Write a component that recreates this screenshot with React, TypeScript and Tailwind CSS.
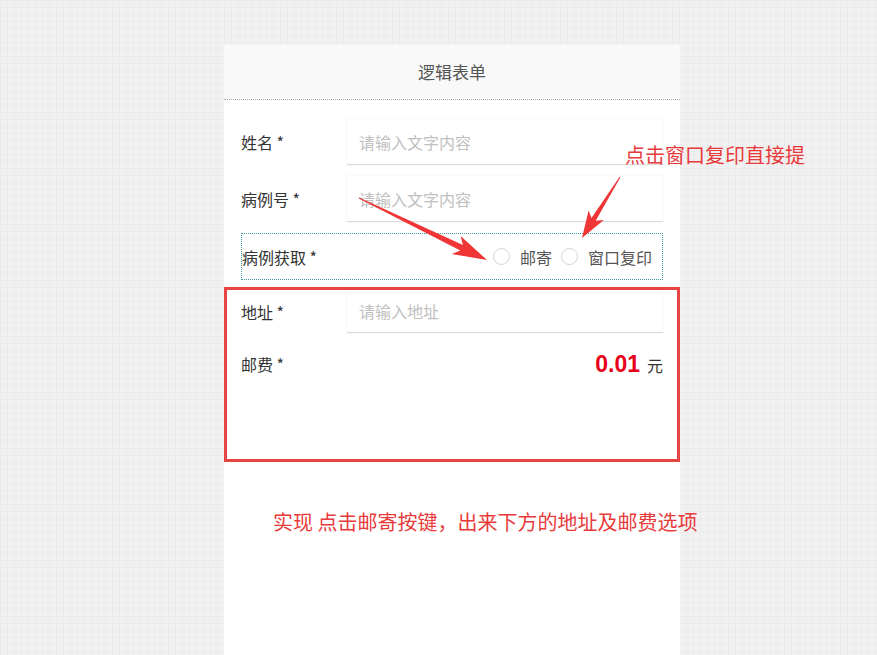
import React, { useState } from 'react';

const FONT = "font-['Microsoft_YaHei','Noto_Sans_CJK_SC',sans-serif]";

type Way = 'post' | 'window';

const Field = ({ label, placeholder, h = 'h-[46px]' }: { label: string; placeholder: string; h?: string }) => (
  <div className="flex items-center">
    <div className="w-[106px] shrink-0 text-[16px] text-[#333]">{label} *</div>
    <input
      type="text"
      placeholder={placeholder}
      className={`${h} flex-1 border-b border-[#dadada] bg-white px-3 text-[16px] text-[#333] shadow-[0_0_3px_rgba(0,0,0,0.06)] outline-none placeholder:text-[#c0c0c0]`}
    />
  </div>
);

const Radio = ({ checked, label, onClick }: { checked: boolean; label: string; onClick: () => void }) => (
  <button onClick={onClick} className="flex items-center gap-[10px] text-[16px] text-[#555]">
    <span className="flex h-[17px] w-[17px] items-center justify-center rounded-full border border-[#d4d4d4] bg-white">
      {checked && <span className="h-[9px] w-[9px] rounded-full bg-[#e83a3a]" />}
    </span>
    {label}
  </button>
);

export default function App() {
  const [way, setWay] = useState<Way | null>(null);

  return (
    <div
      className={`relative min-h-[655px] w-full overflow-hidden bg-[#f1f1f1] bg-[linear-gradient(#ebebeb_1px,transparent_1px),linear-gradient(90deg,#ebebeb_1px,transparent_1px)] bg-[size:7px_7px] pt-[45px] ${FONT}`}
    >
      <div className="ml-[224px] min-h-[610px] w-[456px] bg-white">
        <div className="flex h-[55px] items-center justify-center border-b border-dotted border-[#aaa] bg-[#f9f9f9] text-[17px] text-[#555]">
          逻辑表单
        </div>

        <div className="flex flex-col gap-[11px] px-[17px] pt-[19px]">
          <Field label="姓名" placeholder="请输入文字内容" />
          <Field label="病例号" placeholder="请输入文字内容" />
          <div className="flex h-[47px] items-center justify-between border border-dotted border-[#3f9e9e] pr-[10px]">
            <span className="text-[16px] text-[#333]">病例获取 *</span>
            <div className="flex items-center gap-[9px]">
              <Radio checked={way === 'post'} label="邮寄" onClick={() => setWay('post')} />
              <Radio checked={way === 'window'} label="窗口复印" onClick={() => setWay('window')} />
            </div>
          </div>
        </div>

        <div className="mt-[7px] h-[175px] border-[3px] border-[#e84444] px-[14px]">
          <Field label="地址" placeholder="请输入地址" h="h-[43px]" />
          <div className="mt-[14px] flex items-center justify-between">
            <span className="text-[16px] text-[#333]">邮费 *</span>
            <span className="flex items-baseline gap-[7px]">
              <span className="font-['Liberation_Sans',Arial,sans-serif] text-[23px] font-bold text-[#e8001a]">0.01</span>
              <span className="text-[16px] text-[#333]">元</span>
            </span>
          </div>
        </div>
      </div>

      <div className="absolute left-[625px] top-[141px] text-[20px] leading-[28px] text-[#e83a3a]">点击窗口复印直接提</div>
      <div className="absolute left-[273px] top-[508px] text-[20px] leading-[28px] text-[#e83a3a]">
        实现 点击邮寄按键，出来下方的地址及邮费选项
      </div>

      <svg className="pointer-events-none absolute left-0 top-0" width="877" height="655" viewBox="0 0 877 655">
        <polygon
          fill="#ef3535"
          points="359.2,197.6 462.9,245.0 460.6,236.1 487,260 451.8,254.1 460.3,250.4 358.8,198.4"
        />
        <polygon
          fill="#ef3535"
          points="620.4,177.2 595.7,220.7 603.8,220.0 582,238 588.6,210.4 591.5,218.1 619.6,176.8"
        />
      </svg>
    </div>
  );
}
